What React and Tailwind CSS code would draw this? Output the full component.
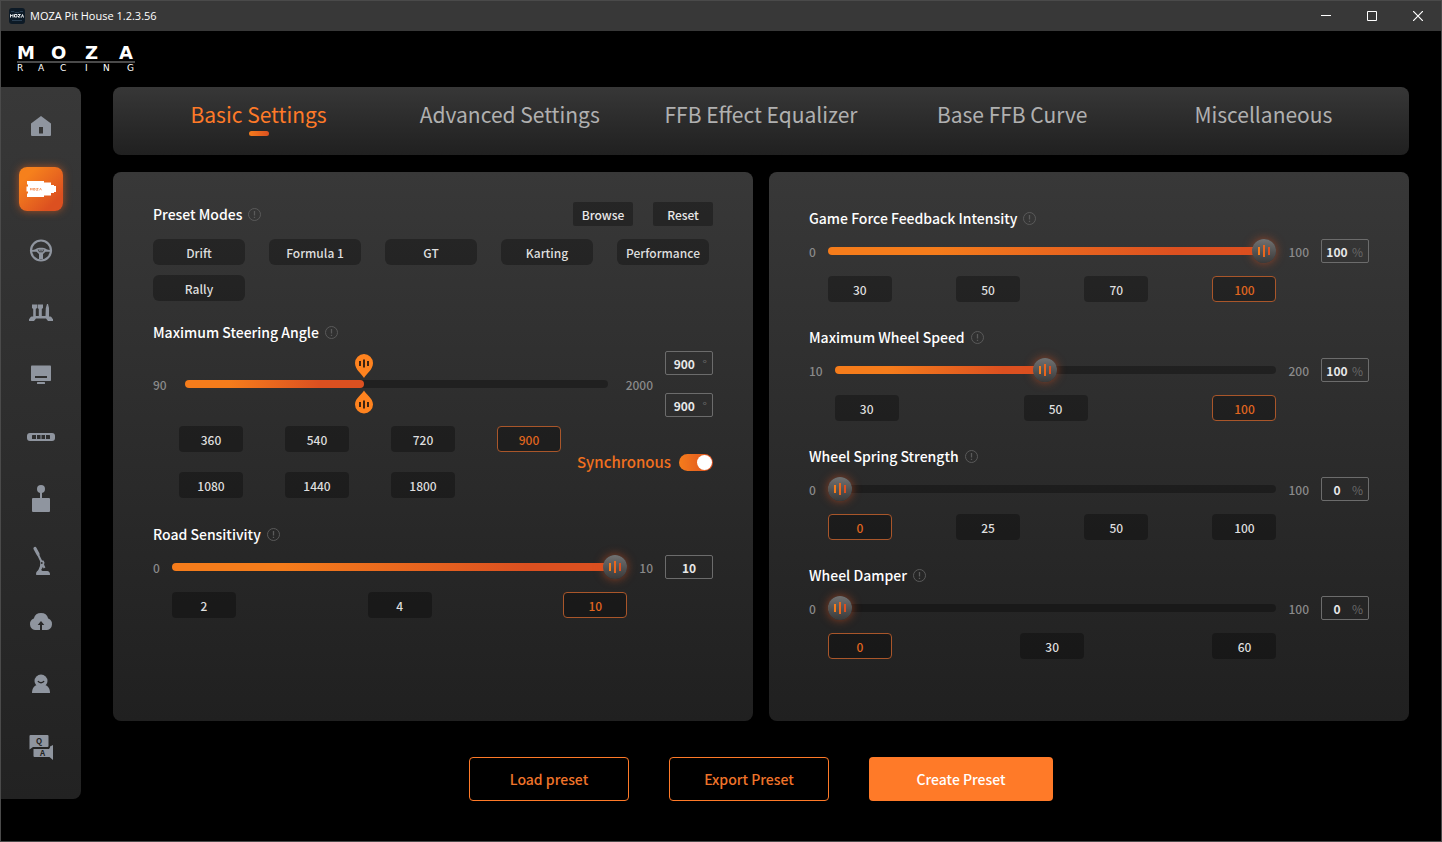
import React, { useState } from "react";

const TABS = [
  "Basic Settings",
  "Advanced Settings",
  "FFB Effect Equalizer",
  "Base FFB Curve",
  "Miscellaneous",
];

const MODES = ["Drift", "Formula 1", "GT", "Karting", "Performance", "Rally"];

const ANGLES = [360, 540, 720, 900, 1080, 1440, 1800];

const GAME_SLIDERS = [
  { title: "Game Force Feedback Intensity", min: 0, max: 100, initial: 100, presets: [30, 50, 70, 100] },
  { title: "Maximum Wheel Speed", min: 10, max: 200, initial: 100, presets: [30, 50, 100] },
  { title: "Wheel Spring Strength", min: 0, max: 100, initial: 0, presets: [0, 25, 50, 100] },
  { title: "Wheel Damper", min: 0, max: 100, initial: 0, presets: [0, 30, 60] },
];

// Sidebar icons share a 44x44 canvas, dark fills cut the details out.
const NAV_ITEMS = [
  {
    label: "Home",
    icon: (
      <>
        <path d="M22 11 32 18.5V30a1 1 0 0 1-1 1H13a1 1 0 0 1-1-1V18.5z" />
        <rect className="fill-[#363636]" x="20" y="22" width="4" height="6.5" />
      </>
    ),
  },
  {
    label: "Wheel Base",
    icon: (
      <>
        <path d="M8 14H25V15.5H32V18H35V19H37V25H35V26H32V28.5H25V30H8V26.5H9V24.500H7.500V19.500H9V17.500H8z" />
        <path
          d="M11.500 23.300v-2l.8 1 .8-1v2M14.300 21.500h1.800v1.600h-1.800zM17.300 21.500h2l-2 1.700h2M20.500 23.300l1-2 1 2"
          fill="none"
          stroke="#ee6c20"
          strokeWidth="0.6"
        />
      </>
    ),
  },
  {
    label: "Steering Wheel",
    icon: (
      <>
        <circle cx="22" cy="21.500" r="10" fill="none" stroke="currentColor" strokeWidth="2.200" />
        <path d="M13 21c3 0 4-1.500 6-2 2-.5 4-.5 6 0 2 .5 3 2 6 2v1.800h-4.500L24 25v5h-4v-5l-2.500-2.200H13z" />
        <path className="stroke-[#313131]" d="m19.300 20.500 1 2.300h3.400l1-2.300M21 20.500l1 1 1-1" fill="none" strokeWidth="0.9" />
      </>
    ),
  },
  {
    label: "Pedals",
    icon: (
      <path d="M13 13.500h5v3.500l-1.200 1V25h3v-7l-1.200-1v-3.500h5.400V17l-1.200 1v7h3.700l.3-8 1.200-4h1l1 4V25.500h1.500c1.500.6 1.300 2 2.500 2.500v2h-5l-2-2.500H17l-2 2.500h-5v-2c1.200-.5 1-2 2.500-2.500h1.700V18L13 17z" />
    ),
  },
  {
    label: "Display",
    icon: (
      <>
        <rect x="12" y="12.500" width="20" height="15.500" rx="0.8" />
        <rect className="fill-[#2f2f2f]" x="16" y="23" width="12" height="2" />
        <rect x="18" y="29" width="8" height="2" rx="0.5" />
      </>
    ),
  },
  {
    label: "Dashboard",
    icon: (
      <>
        <rect x="8" y="18" width="28" height="8" rx="3" />
        <rect className="fill-[#2d2d2d]" x="13" y="20" width="18" height="4" rx="0.5" />
        <path d="M17.500 20v4M22 20v4M26.500 20v4" stroke="currentColor" />
      </>
    ),
  },
  {
    label: "Shifter",
    icon: (
      <>
        <circle cx="22" cy="12" r="4" />
        <rect x="21" y="15" width="2" height="7" />
        <rect x="13" y="21" width="18" height="14" rx="1" />
      </>
    ),
  },
  {
    label: "Handbrake",
    icon: (
      <>
        <path d="M16 9.500 19 15" stroke="currentColor" strokeWidth="3.200" strokeLinecap="round" />
        <path d="M19 15.500 25.500 29" stroke="currentColor" strokeWidth="2" />
        <path d="M21.500 21.500h3l1 2-.5 2.500-4 7h-2.500l2.500-6z" />
        <path d="M17.500 36c-.7 0-.7-3.500 1.500-4.500l2.500-1 2 1.500h5c2 .5 2.700 2 2.500 4z" />
        <circle className="fill-[#2a2a2a]" cx="22.800" cy="24" r="0.9" />
      </>
    ),
  },
  {
    label: "Firmware",
    icon: (
      <>
        <path d="M16 29a6 6 0 0 1-1.200-11.500 7.500 7.500 0 0 1 14.400 0A6 6 0 0 1 28 29z" />
        <path className="fill-[#272727]" d="m22 20 3.300 4H23v5h-2v-5h-2.300z" />
      </>
    ),
  },
  {
    label: "Account",
    icon: (
      <>
        <circle cx="22" cy="18" r="6.500" />
        <path d="M13 30c0-5 2.500-8 6-8h6c3.500 0 6 3 6 8z" />
        <path className="stroke-[#262626]" d="M19 18c1.200 2.200 4.800 2.200 6 0" fill="none" strokeWidth="1.500" />
      </>
    ),
  },
  {
    label: "Help",
    icon: (
      <>
        <path d="M11.500 10H28.500a1 1 0 0 1 1 1V21a1 1 0 0 1-1 1H14L10.500 24.500V11a1 1 0 0 1 1-1z" />
        <path d="M14.500 24H30l1-1.500V21.500L34 20V35L30.500 32H15.500a1 1 0 0 1-1-1z" />
        <text className="fill-[#242424] font-bold" x="20" y="18.500" fontSize="8" textAnchor="middle">Q</text>
        <text className="fill-[#242424] font-bold" x="23.500" y="31" fontSize="8" textAnchor="middle">A</text>
      </>
    ),
  },
];

const TitleBar = () => (
  <div className="flex h-[30px] items-center bg-[#383838] pl-2 font-['Open_Sans',sans-serif]">
    <svg className="h-4 w-4" viewBox="0 0 16 16" aria-hidden="true">
      <rect width="16" height="16" rx="3" fill="#0d1a26" />
      <path d="M2 3.500h3l1 1h4l1-1h3M3 12.500h10" stroke="#2b3f52" fill="none" />
      <path
        d="M1.500 9.500v-3l1.200 1.500L4 6.500v3M5.500 6.500H8v2.500H5.500zM9 6.500h2.500L9 9h2.500M12.500 9.500l1-3 1 3"
        stroke="#fff"
        strokeWidth="0.9"
        fill="none"
      />
    </svg>
    <span className="ml-[5px] flex-1 text-[11px] text-white">MOZA Pit House 1.2.3.56</span>
    <button className="grid h-full w-[46px] place-items-center" aria-label="Minimize">
      <svg className="h-[10px] w-[10px]" viewBox="0 0 10 10">
        <path d="M0 4.500h10" stroke="#fff" />
      </svg>
    </button>
    <button className="grid h-full w-[46px] place-items-center" aria-label="Maximize">
      <svg className="h-[10px] w-[10px]" viewBox="0 0 10 10">
        <path d="M.5.5h9v9h-9z" stroke="#fff" fill="none" />
      </svg>
    </button>
    <button className="grid h-full w-[46px] place-items-center" aria-label="Close">
      <svg className="h-[10px] w-[10px]" viewBox="0 0 10 10">
        <path d="m0 0 10 10M10 0 0 10" stroke="#fff" strokeWidth="1.200" />
      </svg>
    </button>
  </div>
);

const Logo = () => (
  <svg className="h-9 w-[122px]" viewBox="0 0 122 36" fill="#fff" role="img" aria-label="MOZA Racing">
    <text x="0 34 68 102" y="18" fontSize="18" fontWeight="700" fontFamily="DejaVu Sans">MOZA</text>
    <path d="M0 21h118" stroke="#4a4a4a" strokeWidth="2" />
    <text x="0 21 43 68 86 110" y="30" fontSize="9" fontFamily="DejaVu Sans">RACING</text>
  </svg>
);

const Sidebar = () => {
  const [current, setCurrent] = useState("Wheel Base");
  return (
    <nav className="flex w-20 shrink-0 flex-col items-center gap-[18px] self-start rounded-r-lg bg-linear-to-b from-[#383838] to-[#222222] pt-[18px] pb-[30px]">
      {NAV_ITEMS.map((item) => (
        <button
          key={item.label}
          aria-label={item.label}
          onClick={() => setCurrent(item.label)}
          className={
            item.label === current
              ? "h-11 w-11 rounded-lg bg-linear-to-br from-[#f6801c] from-20% to-[#dc5020] to-80% text-white shadow-[0_0_8px_#e0601faa]"
              : "h-11 w-11 text-[#8f959f]"
          }
        >
          <svg viewBox="0 0 44 44" fill="currentColor">{item.icon}</svg>
        </button>
      ))}
    </nav>
  );
};

const SectionTitle = ({ children }) => (
  <div className="flex h-6 items-center gap-[6px]">
    <h2 className="text-sm font-medium">{children}</h2>
    <svg className="h-[13px] w-[13px] text-[#5a5a5a]" viewBox="0 0 13 13" fill="none" stroke="currentColor" aria-hidden="true">
      <circle cx="6.500" cy="6.500" r="6" />
      <path d="M6.500 3v4.500M6.500 8.700v1.200" strokeWidth="1.300" />
    </svg>
  </div>
);

const PresetButton = ({ active, children, onClick }) => (
  <button
    onClick={onClick}
    className={
      active
        ? "h-[26px] w-16 rounded border border-[#a9562a] bg-black/30 pt-px text-xs font-medium text-[#e0661f]"
        : "h-[26px] w-16 rounded bg-black/30 pt-px text-xs font-medium text-[#dedede]"
    }
  >
    {children}
  </button>
);

const ValueBox = ({ label, value, unit, onChange }) => (
  <label className="flex h-6 w-12 items-center rounded-xs border border-[#6c6c6c] pt-px text-xs">
    <input
      type="text"
      aria-label={label}
      value={value}
      onChange={(e) => onChange(Number(e.target.value) || 0)}
      className="w-full min-w-0 flex-1 bg-transparent text-center font-bold text-[#e8e8e8] outline-none"
    />
    {unit && <span className="pr-[5px] font-normal text-[#686868]">{unit}</span>}
  </label>
);

const Slider = ({ label, min, max, value, onChange }) => {
  const ratio = (value - min) / (max - min);
  return (
    <div className="relative flex h-6 items-center">
      <div className="h-2 w-full overflow-hidden rounded-full bg-black/30">
        <div
          className="h-full bg-linear-to-r from-[#f57c1b] from-25% to-[#dc5020] to-80%"
          style={{ width: `calc(${ratio * 100}% + ${12 - ratio * 24}px)` }}
        />
      </div>
      <div
        className="absolute flex h-6 w-6 items-center justify-center gap-[3px] rounded-full bg-linear-to-b from-[#727272] to-[#3a3a3a] shadow-[0_0_10px_#d8502099]"
        style={{ left: `calc(${ratio * 100}% - ${ratio * 24}px)` }}
      >
        <i className="h-2 w-[2px] bg-[#f57c1b]" />
        <i className="h-3 w-[2px] bg-[#e8661e]" />
        <i className="h-2 w-[2px] bg-[#dc5020]" />
      </div>
      <input
        type="range"
        aria-label={label}
        min={min}
        max={max}
        value={value}
        onChange={(e) => onChange(Number(e.target.value))}
        className="absolute inset-0 h-full w-full cursor-pointer opacity-0"
      />
    </div>
  );
};

const SliderSection = ({ title, min, max, initial, presets, unit }) => {
  const [value, setValue] = useState(initial);
  return (
    <section>
      <SectionTitle>{title}</SectionTitle>
      <div className="mt-[9px] grid grid-cols-[auto_1fr_auto_auto] items-center gap-x-3 gap-y-[13px] text-xs font-medium text-[#8a8a8a]">
        <span className="pt-px">{min}</span>
        <Slider label={title} min={min} max={max} value={value} onChange={setValue} />
        <span className="pt-px">{max}</span>
        <ValueBox label={`${title} value`} value={value} unit={unit} onChange={setValue} />
        <div className="col-start-2 flex justify-between">
          {presets.map((preset) => (
            <PresetButton key={preset} active={preset === value} onClick={() => setValue(preset)}>
              {preset}
            </PresetButton>
          ))}
        </div>
      </div>
    </section>
  );
};

const AngleSection = () => {
  const [angle, setAngle] = useState(900);
  const [limit, setLimit] = useState(900);
  const [sync, setSync] = useState(true);

  const changeAngle = (value) => {
    setAngle(value);
    if (sync) setLimit(value);
  };
  const changeLimit = (value) => {
    setLimit(value);
    if (sync) setAngle(value);
  };
  const percent = (value) => `${((value - 90) / 1910) * 100}%`;

  return (
    <section className="mt-[19px]">
      <SectionTitle>Maximum Steering Angle</SectionTitle>
      <div className="mt-[7px] flex items-center text-xs font-medium text-[#8a8a8a]">
        <span className="pt-px">90</span>
        <div className="relative mx-[18px] flex h-6 flex-1 items-center">
          <div className="h-2 w-full rounded-full bg-black/30">
            <div
              className="h-full rounded-full bg-linear-to-r from-[#f57c1b] from-25% to-[#dc5020] to-75%"
              style={{ width: percent(angle) }}
            />
          </div>
          <svg
            className="absolute -top-[18px] h-6 w-[18px] -translate-x-1/2"
            style={{ left: percent(angle) }}
            viewBox="0 0 18 24"
          >
            <path d="M9 24C7.500 20.500 0 16 0 9a9 9 0 0 1 18 0c0 7-7.500 11.500-9 15z" fill="#ff831f" />
            <path d="M5 7v5M9 5.500v8M13 7v5" stroke="#2a1a10" strokeWidth="1.800" />
          </svg>
          <svg
            className="absolute top-[18px] h-6 w-[18px] -translate-x-1/2"
            style={{ left: percent(limit) }}
            viewBox="0 0 18 24"
          >
            <path d="M9 0.500C7.500 4 0 8 0 14.500a9 9 0 0 0 18 0C18 8 10.500 4 9 .5z" fill="#ff831f" />
            <path d="M5 12v5M9 10.500v8M13 12v5" stroke="#2a1a10" strokeWidth="1.800" />
          </svg>
          <input
            type="range"
            aria-label="Maximum steering angle"
            min="90"
            max="2000"
            value={angle}
            onChange={(e) => changeAngle(Number(e.target.value))}
            className="absolute inset-x-0 -top-4 h-7 w-full cursor-pointer opacity-0"
          />
          <input
            type="range"
            aria-label="Steering angle limit"
            min="90"
            max="2000"
            value={limit}
            onChange={(e) => changeLimit(Number(e.target.value))}
            className="absolute inset-x-0 top-3 h-7 w-full cursor-pointer opacity-0"
          />
        </div>
        <span className="mr-3 pt-px">2000</span>
        <div className="flex flex-col gap-[18px]">
          <ValueBox label="Maximum steering angle value" value={angle} unit="°" onChange={changeAngle} />
          <ValueBox label="Steering angle limit value" value={limit} unit="°" onChange={changeLimit} />
        </div>
      </div>
      <div className="mt-[9px] flex items-center">
        <div className="mr-4 ml-[26px] grid flex-1 grid-cols-[repeat(4,64px)] justify-between gap-y-5">
          {ANGLES.map((preset) => (
            <PresetButton key={preset} active={preset === angle} onClick={() => changeAngle(preset)}>
              {preset}
            </PresetButton>
          ))}
        </div>
        <label className="flex items-center gap-2 text-[15px] font-medium text-[#f0701f]">
          Synchronous
          <input
            type="checkbox"
            checked={sync}
            onChange={(e) => setSync(e.target.checked)}
            className="flex h-[17px] w-[34px] appearance-none items-center rounded-full bg-[#1c1c1c] p-px before:h-[15px] before:w-[15px] before:rounded-full before:bg-white checked:justify-end checked:bg-linear-to-r checked:from-[#f57c1b] checked:to-[#dc5020]"
          />
        </label>
      </div>
    </section>
  );
};

const App = () => {
  const [tab, setTab] = useState("Basic Settings");

  return (
    <div className="flex min-h-screen flex-col border border-[#4a4a4a] bg-black font-['Noto_Sans_CJK_SC',sans-serif] text-white">
      <TitleBar />
      <header className="flex h-14 items-center px-4">
        <Logo />
      </header>
      <div className="flex flex-1">
        <Sidebar />
        <main className="flex flex-1 flex-col px-8 pb-10">
          <nav className="grid h-[68px] grid-cols-5 rounded-lg bg-linear-to-b from-[#373737] to-[#202020] px-5">
            {TABS.map((name) => (
              <button
                key={name}
                onClick={() => setTab(name)}
                className={
                  name === tab
                    ? "flex flex-col items-center gap-px pt-[11px] text-[21px] leading-8 text-[#ff7a28]"
                    : "flex flex-col items-center gap-px pt-[11px] text-[21px] leading-8 text-[#b0b0b0]"
                }
              >
                {name}
                {name === tab && (
                  <span className="h-[5px] w-5 rounded-full bg-linear-to-r from-[#f57c1b] to-[#dc5020]" />
                )}
              </button>
            ))}
          </nav>

          <div className="mt-[17px] grid flex-1 grid-cols-2 gap-4">
            <div className="rounded-lg bg-linear-to-b from-[#383838] to-[#202020] px-10 pt-[30px] pb-10">
              <div className="flex h-6 items-center justify-between">
                <SectionTitle>Preset Modes</SectionTitle>
                <div className="flex gap-5 text-xs font-medium text-[#e8e8e8]">
                  <button className="h-6 w-[60px] rounded-xs bg-black/30 pt-px">Browse</button>
                  <button className="h-6 w-[60px] rounded-xs bg-black/30 pt-px">Reset</button>
                </div>
              </div>
              <div className="mt-[13px] flex flex-wrap gap-x-6 gap-y-[10px]">
                {MODES.map((mode) => (
                  <button key={mode} className="h-[26px] w-[92px] rounded-md bg-black/30 pt-px text-xs font-medium text-[#dedede]">
                    {mode}
                  </button>
                ))}
              </div>
              <AngleSection />
              <div className="mt-6">
                <SliderSection title="Road Sensitivity" min={0} max={10} initial={10} presets={[2, 4, 10]} />
              </div>
            </div>

            <div className="flex flex-col gap-[23px] rounded-lg bg-linear-to-b from-[#383838] to-[#202020] px-10 pt-[34px] pb-10">
              {GAME_SLIDERS.map((slider) => (
                <SliderSection key={slider.title} {...slider} unit="%" />
              ))}
            </div>
          </div>

          <div className="mt-9 flex justify-center gap-10 text-sm font-medium">
            <button className="h-11 w-40 rounded border border-[#ff7a28] text-[#f0742a]">Load preset</button>
            <button className="h-11 w-40 rounded border border-[#ff7a28] text-[#f0742a]">Export Preset</button>
            <button className="h-11 w-[184px] rounded bg-[#ff7a28] text-white">Create Preset</button>
          </div>
        </main>
      </div>
    </div>
  );
};

export default App;
